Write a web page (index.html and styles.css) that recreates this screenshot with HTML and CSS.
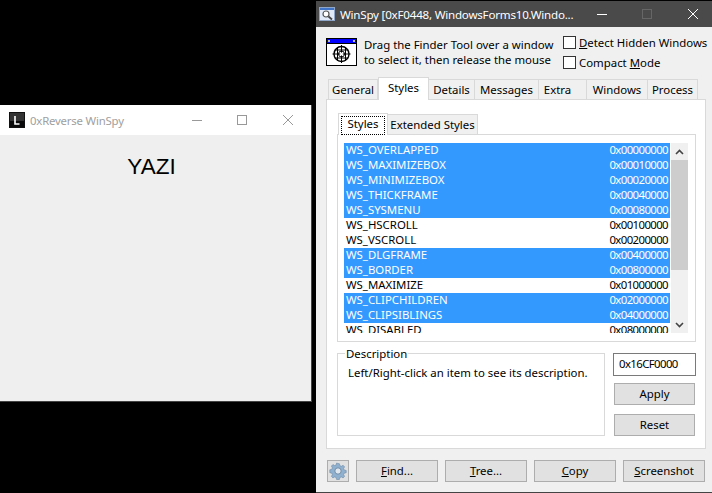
FILE: index.html
```html
<!DOCTYPE html>
<html lang="en">
<head>
    <meta charset="UTF-8">
    <title>WinSpy</title>
    <link rel="stylesheet" href="styles.css">
</head>
<body>
    <div class="window target-window">
        <div class="target-title">
            <svg class="target-icon" width="16" height="16" viewBox="0 0 16 16">
                <rect width="16" height="16" fill="#111"/>
                <rect x="1" y="1" width="14" height="14" fill="#333"/>
                <rect x="1" y="9" width="14" height="6" fill="#0a0a0a"/>
                <path d="M6 4v8h4.5" fill="none" stroke="#fff" stroke-width="1.6"/>
            </svg>
            <span class="target-name">0xReverse WinSpy</span>
            <svg class="caption-icons" width="108" height="14" viewBox="0 0 108 14">
                <g fill="none" stroke="#999" stroke-width="1">
                    <path d="M0 7.5h10"/>
                    <rect x="45.5" y="2.5" width="9" height="9"/>
                    <path d="M91 2l10 10M101 2l-10 10"/>
                </g>
            </svg>
        </div>
        <div class="target-body">YAZI</div>
    </div>

    <div class="window spy-window">
        <div class="spy-title">
            <svg class="spy-icon" width="16" height="16" viewBox="0 0 16 16">
                <rect x="0.5" y="1.5" width="15" height="13" fill="#dfe9f7" stroke="#8fa6c8"/>
                <rect x="1" y="2" width="14" height="2" fill="#3f74c9"/>
                <circle cx="7" cy="8" r="3" fill="#fff" stroke="#555" stroke-width="1.2"/>
                <path d="M9.5 10.5l3.5 3" stroke="#444" stroke-width="1.8"/>
            </svg>
            <span class="spy-name">WinSpy [0xF0448, WindowsForms10.Windo...</span>
            <svg class="caption-icons" width="101" height="12" viewBox="0 0 101 12">
                <path d="M0 6.5h10" stroke="#fff"/>
                <rect x="45.5" y="1.5" width="9" height="9" fill="none" stroke="#666"/>
                <path d="M91 1l10 10M101 1L91 11" stroke="#fff" fill="none"/>
            </svg>
        </div>

        <div class="spy-content">
            <div class="finder-row">
                <svg class="finder-icon" width="31" height="28" viewBox="0 0 31 28">
                    <rect x="0.5" y="0.5" width="30" height="27" fill="#fff" stroke="#000"/>
                    <rect x="1" y="1" width="29" height="4" fill="#00f"/>
                    <rect x="2" y="2" width="2" height="2" fill="#bbb"/>
                    <rect x="27" y="2" width="2" height="2" fill="#bbb"/>
                    <path d="M1 5.5h29" stroke="#000"/>
                    <g fill="none" stroke="#000">
                        <circle cx="15.5" cy="16" r="7.5" stroke-width="1.4"/>
                        <circle cx="15.5" cy="16" r="3"/>
                        <path d="M15.5 7v18M6.5 16h18M11.5 9v14M19.5 9v14M8.5 12h14M8.5 20h14"/>
                    </g>
                    <circle cx="15.5" cy="16" r="1.5" fill="#fff"/>
                </svg>
                <p class="finder-text">Drag the Finder Tool over a window<br>to select it, then release the mouse</p>
                <div class="finder-options">
                    <label class="check"><span class="check-box"></span><span><u>D</u>etect Hidden Windows</span></label>
                    <label class="check"><span class="check-box"></span><span>Compact <u>M</u>ode</span></label>
                </div>
            </div>

            <div class="tabs">
                <div class="tab tab-general">General</div>
                <div class="tab tab-styles active">Styles</div>
                <div class="tab tab-details">Details</div>
                <div class="tab tab-messages">Messages</div>
                <div class="tab tab-extra">Extra</div>
                <div class="tab tab-windows">Windows</div>
                <div class="tab tab-process">Process</div>
            </div>

            <div class="panel">
                <div class="subtabs">
                    <div class="subtab active"><span class="focus">Styles</span></div>
                    <div class="subtab">Extended Styles</div>
                </div>
                <div class="list-box">
                    <div class="list" id="styleList"></div>
                    <div class="scrollbar">
                        <div class="scroll-btn">
                            <svg width="9" height="6" viewBox="0 0 9 6"><path d="M1 5l3.5-3.5L8 5" fill="none" stroke="#444" stroke-width="1.6"/></svg>
                        </div>
                        <div class="scroll-track"><div class="scroll-thumb"></div></div>
                        <div class="scroll-btn">
                            <svg width="9" height="6" viewBox="0 0 9 6"><path d="M1 1l3.5 3.5L8 1" fill="none" stroke="#444" stroke-width="1.6"/></svg>
                        </div>
                    </div>
                </div>
                <div class="lower">
                    <fieldset class="description">
                        <legend>Description</legend>
                        <p>Left/Right-click an item to see its description.</p>
                    </fieldset>
                    <div class="value-col">
                        <div class="value-edit">0x16CF0000</div>
                        <button class="btn btn-side">Apply</button>
                        <button class="btn btn-side">Reset</button>
                    </div>
                </div>
            </div>

            <div class="toolbar">
                <button class="btn gear-btn">
                    <svg width="18" height="18" viewBox="0 0 18 18">
                        <path d="M9 1.5l1.4.2.5 2 1.4.6 1.8-1 1.5 1.5-1 1.8.6 1.4 2 .5v2.2l-2 .5-.6 1.4 1 1.8-1.5 1.5-1.8-1-1.4.6-.5 2H7.6l-.5-2-1.4-.6-1.8 1-1.5-1.5 1-1.8-.6-1.4-2-.5V7.8l2-.5.6-1.4-1-1.8 1.5-1.5 1.8 1 1.4-.6.5-2z" fill="#8fb0cf" stroke="#6f8ba6" stroke-width="0.6"/>
                        <circle cx="9" cy="9" r="3.2" fill="#dfe6ee" stroke="#6f8ba6"/>
                    </svg>
                </button>
                <button class="btn btn-main"><u>F</u>ind...</button>
                <button class="btn btn-main"><u>T</u>ree...</button>
                <button class="btn btn-main"><u>C</u>opy</button>
                <button class="btn btn-main"><u>S</u>creenshot</button>
            </div>
        </div>
    </div>

    <script>
        const styles = [
            ['WS_OVERLAPPED', '0x00000000', true],
            ['WS_MAXIMIZEBOX', '0x00010000', true],
            ['WS_MINIMIZEBOX', '0x00020000', true],
            ['WS_THICKFRAME', '0x00040000', true],
            ['WS_SYSMENU', '0x00080000', true],
            ['WS_HSCROLL', '0x00100000', false],
            ['WS_VSCROLL', '0x00200000', false],
            ['WS_DLGFRAME', '0x00400000', true],
            ['WS_BORDER', '0x00800000', true],
            ['WS_MAXIMIZE', '0x01000000', false],
            ['WS_CLIPCHILDREN', '0x02000000', true],
            ['WS_CLIPSIBLINGS', '0x04000000', true],
            ['WS_DISABLED', '0x08000000', false]
        ];

        const list = document.getElementById('styleList');
        styles.forEach(function(item) {
            const row = document.createElement('div');
            row.className = item[2] ? 'row selected' : 'row';
            row.innerHTML = '<span>' + item[0] + '</span><span class="hex">' + item[1] + '</span>';
            list.appendChild(row);
        });
    </script>
</body>
</html>
```

FILE: styles.css
```css
* {
    box-sizing: border-box;
}

html, body {
    height: 100%;
}

body {
    margin: 0;
    background: #000;
    font-family: "Noto Sans", "Open Sans", sans-serif;
    font-size: 11.4px;
    color: #000;
    overflow: hidden;
}

.window {
    position: absolute;
}

/* left window */
.target-window {
    left: 0;
    top: 105px;
    width: 312px;
    height: 297px;
    border-right: 1px solid #444;
    border-bottom: 1px solid #444;
    background: #efefef;
}

.target-title {
    height: 30px;
    background: #fff;
    display: flex;
    align-items: center;
    padding: 0 11px 0 9px;
}

.target-name {
    margin-left: 5px;
    color: #a0a0a0;
    flex: 1;
    letter-spacing: -0.2px;
}

.target-body {
    padding: 20px 8px 0 0;
    text-align: center;
    font-family: "Liberation Sans", Arial, sans-serif;
    font-size: 22.5px;
    line-height: 24px;
}

/* right window */
.spy-window {
    left: 316px;
    top: 1px;
    width: 396px;
    height: 492px;
    background: #f0f0f0;
    border-bottom: 1px solid #444;
}

.spy-title {
    height: 26px;
    background: #4a4a4a;
    color: #fff;
    display: flex;
    align-items: center;
    padding: 0 14px 0 3px;
}

.spy-name {
    margin-left: 5px;
    flex: 1;
    white-space: nowrap;
    font-size: 11.6px;
    letter-spacing: -0.22px;
}

.spy-icon {
    flex: none;
}

.spy-content {
    padding: 0 6px 0 10px;
}

.finder-row {
    height: 50px;
    display: flex;
    align-items: flex-start;
}

.finder-icon {
    flex: none;
    margin-top: 11px;
}

.finder-text {
    flex: none;
    margin: 10px 0 0 7px;
    line-height: 15px;
    width: 199px;
    white-space: nowrap;
}

.finder-options {
    flex: none;
    margin-top: 8px;
}

.check {
    display: flex;
    align-items: center;
    height: 14px;
    margin-bottom: 6px;
    white-space: nowrap;
}

.check-box {
    width: 13px;
    height: 13px;
    border: 1px solid #333;
    background: #fff;
    margin-right: 3px;
}

.tabs {
    display: flex;
    height: 22px;
    margin: 0 0 0 2px;
    align-items: flex-end;
    position: relative;
    z-index: 1;
}

.tab {
    height: 20px;
    border: 1px solid #d9d9d9;
    border-bottom: none;
    border-left: none;
    background: #f0f0f0;
    text-align: center;
    line-height: 19px;
}

.tab-general { width: 50px; border-left: 1px solid #d9d9d9; }
.tab-styles { width: 51px; }
.tab-details { width: 46px; }
.tab-messages { width: 64px; }
.tab-extra { width: 48px; padding-right: 10px; }
.tab-windows { width: 61px; }
.tab-process { width: 50px; }

.tab.active {
    height: 23px;
    margin-bottom: -1px;
    background: #fff;
    border-left: 1px solid #d9d9d9;
    padding-bottom: 3px;
}

.panel {
    width: 380px;
    height: 350px;
    border: 1px solid #d9d9d9;
    background: #fff;
    padding: 12px 9px 0 10px;
}

.subtabs {
    display: flex;
    height: 22px;
    align-items: flex-end;
    margin-left: 1px;
    position: relative;
    z-index: 1;
}

.subtab {
    height: 20px;
    width: 90px;
    border: 1px solid #d9d9d9;
    border-left: none;
    border-bottom: none;
    background: #f0f0f0;
    text-align: center;
    line-height: 20px;
}

.subtab.active {
    width: 50px;
    height: 22px;
    margin-bottom: -1px;
    background: #fff;
    border-left: 1px solid #d9d9d9;
    padding: 2px;
}

.focus {
    display: block;
    height: 19px;
    line-height: 15px;
    outline: 1px dotted #000;
    outline-offset: -1px;
}

.list-box {
    width: 359px;
    height: 208px;
    border: 1px solid #d9d9d9;
    padding: 8px 7px 8px 6px;
    display: flex;
}

.list {
    width: 327px;
    height: 190px;
    overflow: hidden;
}

.row {
    height: 15px;
    line-height: 14px;
    padding: 0 2px 0 2px;
    display: flex;
    justify-content: space-between;
}

.row.selected {
    background: #3399ff;
    color: #fff;
}

.hex, .value-edit {
    letter-spacing: -0.6px;
}

.scrollbar {
    width: 17px;
    margin-left: 1px;
    height: 190px;
    background: #f0f0f0;
    display: flex;
    flex-direction: column;
}

.scroll-btn {
    height: 17px;
    display: flex;
    align-items: center;
    justify-content: center;
}

.scroll-track {
    flex: 1;
}

.scroll-thumb {
    height: 110px;
    background: #cdcdcd;
}

.lower {
    display: flex;
    margin-top: 4px;
}

.description {
    width: 268px;
    height: 90px;
    margin: 0;
    border: 1px solid #d9d9d9;
    padding: 0 0 0 10px;
}

.description legend {
    padding: 0 1px;
    margin-left: -3px;
    line-height: 15px;
}

.description p {
    margin: 4px 0 0;
    line-height: 15px;
    white-space: nowrap;
}

.value-col {
    margin: 7px 0 0 8px;
    width: 83px;
    display: flex;
    flex-direction: column;
}

.value-edit {
    height: 23px;
    border: 1px solid #7a7a7a;
    line-height: 20px;
    padding-left: 5px;
}

.btn {
    font: inherit;
    color: #000;
    background: #e1e1e1;
    border: 1px solid #adadad;
    padding: 0 0 1px;
}

.btn-side {
    width: 81px;
    height: 22px;
    margin: 7px 0 0 1px;
}

.btn-side + .btn-side {
    margin-top: 9px;
}

.toolbar {
    display: flex;
    gap: 7px;
    margin: 11px 0 0 1px;
}

.gear-btn {
    width: 22px;
    height: 22px;
    display: flex;
    align-items: center;
    justify-content: center;
}

.btn-main {
    width: 82px;
    height: 22px;
}
```
